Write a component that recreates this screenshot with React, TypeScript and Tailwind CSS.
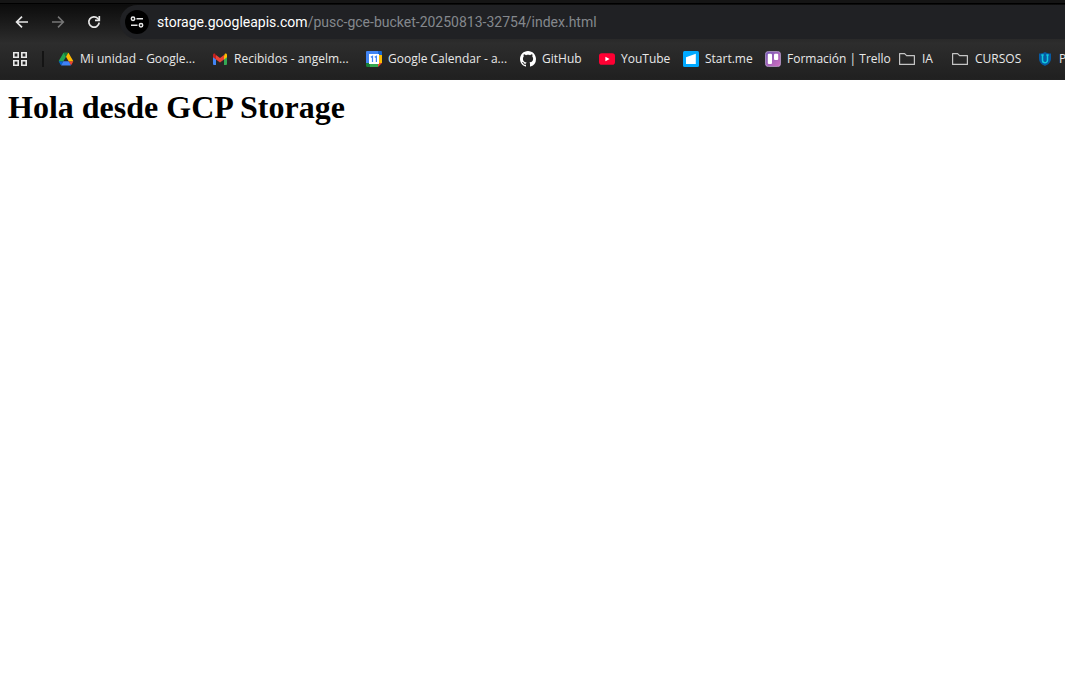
import type { ReactNode } from "react";

function BackIcon() {
  return (
    <svg width="16" height="16" viewBox="0 0 16 16" fill="none" stroke="currentColor" strokeWidth="1.7">
      <path d="M14 8H3M8 2.6 2.6 8 8 13.4" />
    </svg>
  );
}

function ForwardIcon() {
  return (
    <svg width="16" height="16" viewBox="0 0 16 16" fill="none" stroke="currentColor" strokeWidth="1.5">
      <path d="M2 8h11M8 2.6 13.4 8 8 13.4" />
    </svg>
  );
}

function ReloadIcon() {
  return (
    <svg width="16" height="16" viewBox="0 0 16 16" fill="none" stroke="currentColor" strokeWidth="1.7">
      <path d="M13.2 8.6A5.2 5.2 0 1 1 11.9 4.5L13.4 6" />
      <path d="M13.3 2v4.4H9" />
    </svg>
  );
}

function TuneIcon() {
  return (
    <svg width="14" height="14" viewBox="0 0 14 14" fill="none" stroke="currentColor" strokeWidth="1.5">
      <circle cx="3" cy="3.7" r="1.7" />
      <path d="M6.5 3.7H13M1 10.3h6.5" />
      <circle cx="11" cy="10.3" r="1.7" />
    </svg>
  );
}

function GridIcon() {
  return (
    <svg width="16" height="16" viewBox="0 0 16 16" fill="none" stroke="currentColor" strokeWidth="1.6">
      <path d="M1.8 1.8h4.4v4.4H1.8zM9.8 1.8h4.4v4.4H9.8zM1.8 9.8h4.4v4.4H1.8zM9.8 9.8h4.4v4.4H9.8z" />
    </svg>
  );
}

function DriveIcon() {
  return (
    <svg width="16" height="16" viewBox="-5 -4 97.3 86">
      <path d="m6.6 66.85 3.85 6.65c.8 1.4 1.95 2.5 3.3 3.3l13.75-23.8h-27.5c0 1.55.4 3.1 1.2 4.5z" fill="#0066da" />
      <path d="m43.65 25-13.75-23.8c-1.35.8-2.5 1.9-3.3 3.3l-25.4 44a9.06 9.06 0 0 0 -1.2 4.5h27.5z" fill="#22a652" />
      <path d="m73.55 76.8c1.35-.8 2.5-1.9 3.3-3.3l1.6-2.75 7.65-13.25c.8-1.4 1.2-2.95 1.2-4.5h-27.5l5.85 11.5z" fill="#ea4335" />
      <path d="m43.65 25 13.75-23.8c-1.35-.8-2.9-1.2-4.5-1.2h-18.5c-1.6 0-3.15.45-4.5 1.2z" fill="#188038" />
      <path d="m59.8 53h-32.3l-13.75 23.8c1.35.8 2.9 1.2 4.5 1.2h50.8c1.6 0 3.15-.45 4.5-1.2z" fill="#3f82f5" />
      <path d="m73.4 26.5-12.7-22c-.8-1.4-1.95-2.5-3.3-3.3l-13.75 23.8 16.15 28h27.45c0-1.55-.4-3.1-1.2-4.5z" fill="#ffba00" />
    </svg>
  );
}

function GmailIcon() {
  return (
    <svg width="16" height="16" viewBox="0 0 16 16">
      <path d="M1 4v9a1 1 0 0 0 1 1h2V6z" fill="#4285f4" />
      <path d="M15 4v9a1 1 0 0 1-1 1h-2V6z" fill="#34a853" />
      <path d="M12 5v3.6l3-2.3V4c0-1.4-1.3-1.9-2.3-1.1z" fill="#fbbc04" />
      <path d="M4 5v3.6L1 6.3V4c0-1.4 1.3-1.9 2.3-1.1z" fill="#c5221f" />
      <path d="M4 8.6V4l4 3 4-3v4.6l-4 3z" fill="#ea4335" />
    </svg>
  );
}

function CalendarIcon() {
  return (
    <svg width="16" height="16" viewBox="0 0 16 16">
      <path d="M1.2 0H12v4H4v8H0V1.2C0 .5.5 0 1.2 0z" fill="#4285f4" />
      <path d="M12 0h2.8c.7 0 1.2.5 1.2 1.2V4h-4z" fill="#1967d2" />
      <path d="M12 4h4v8h-4z" fill="#fbbc04" />
      <path d="M4 12h8v4H4z" fill="#34a853" />
      <path d="M0 12h4v4H1.2C.5 16 0 15.5 0 14.8z" fill="#188038" />
      <path d="M12 12h4l-4 4z" fill="#ea4335" />
      <path d="M3 3h10v10H3z" fill="#fff" />
      <path d="M4.8 6.2 6.5 5.2V11M8.7 6.2l1.7-1V11" fill="none" stroke="#4285f4" strokeWidth="1.2" />
    </svg>
  );
}

function GitHubIcon() {
  return (
    <svg width="16" height="16" viewBox="0 0 16 16" fill="#fff">
      <path d="M8 0C3.58 0 0 3.58 0 8c0 3.54 2.29 6.53 5.47 7.59.4.07.55-.17.55-.38 0-.19-.01-.82-.01-1.49-2.01.37-2.53-.49-2.69-.94-.09-.23-.48-.94-.82-1.13-.28-.15-.68-.52-.01-.53.63-.01 1.08.58 1.23.82.72 1.21 1.87.87 2.33.66.07-.52.28-.87.51-1.07-1.78-.2-3.64-.89-3.64-3.95 0-.87.31-1.59.82-2.15-.08-.2-.36-1.02.08-2.12 0 0 .67-.21 2.2.82.64-.18 1.32-.27 2-.27s1.36.09 2 .27c1.53-1.04 2.2-.82 2.2-.82.44 1.1.16 1.92.08 2.12.51.56.82 1.27.82 2.15 0 3.07-1.87 3.75-3.65 3.95.29.25.54.73.54 1.48 0 1.07-.01 1.93-.01 2.2 0 .21.15.46.55.38A8 8 0 0 0 16 8c0-4.42-3.58-8-8-8z" />
    </svg>
  );
}

function YouTubeIcon() {
  return (
    <svg width="16" height="16" viewBox="0 0 16 16">
      <rect y="2.3" width="16" height="11.4" rx="2.8" fill="#ff0033" />
      <path d="m6.4 5.7 4.2 2.3-4.2 2.3z" fill="#fff" />
    </svg>
  );
}

function StartMeIcon() {
  return (
    <svg width="16" height="16" viewBox="0 0 16 16">
      <rect width="16" height="16" rx="1.5" fill="#00a9ff" />
      <path d="M3 6.2 12.8 2.8V13H3z" fill="#fff" />
    </svg>
  );
}

function TrelloIcon() {
  return (
    <svg width="16" height="16" viewBox="0 0 16 16">
      <defs>
        <linearGradient id="trello" x1="0" y1="0" x2="1" y2="1">
          <stop offset="0" stopColor="#7157b5" />
          <stop offset="1" stopColor="#d36fc0" />
        </linearGradient>
      </defs>
      <rect x=".4" y=".4" width="15.2" height="15.2" rx="3.2" fill="url(#trello)" stroke="#b7a1cd" strokeWidth=".8" />
      <rect x="2.8" y="2.8" width="4.2" height="10.2" rx="1" fill="#fff" />
      <rect x="9" y="2.8" width="4.2" height="6.2" rx="1" fill="#fff" />
    </svg>
  );
}

function FolderIcon() {
  return (
    <svg width="18" height="16" viewBox="0 0 18 16" fill="none" stroke="#c4c4c4" strokeWidth="1.2">
      <path d="M1.6 2.6h5l2 2h7.8v8.8H1.6z" strokeLinejoin="round" />
    </svg>
  );
}

function ShieldIcon() {
  return (
    <svg width="16" height="16" viewBox="0 0 16 16">
      <path d="M8 1c2 1.3 4 1.6 6 1.6v5c0 3.7-2.5 6-6 7.4-3.5-1.4-6-3.7-6-7.4v-5C4 2.6 6 2.3 8 1z" fill="#075aa2" />
      <path d="M5.5 4v5.2a2.5 2.5 0 0 0 5 0V4M4.3 4h2.4M9.3 4h2.4" fill="none" stroke="#10c9df" strokeWidth="1.5" />
    </svg>
  );
}

type Bookmark = { label: string; icon: ReactNode; width: string };

const bookmarks: Bookmark[] = [
  { label: "Mi unidad - Google...", icon: <DriveIcon />, width: "w-[154px]" },
  { label: "Recibidos - angelm...", icon: <GmailIcon />, width: "w-[154px]" },
  { label: "Google Calendar - a...", icon: <CalendarIcon />, width: "w-[154px]" },
  { label: "GitHub", icon: <GitHubIcon />, width: "w-[79px]" },
  { label: "YouTube", icon: <YouTubeIcon />, width: "w-[84px]" },
  { label: "Start.me", icon: <StartMeIcon />, width: "w-[82px]" },
  { label: "Formación | Trello", icon: <TrelloIcon />, width: "w-[133px]" },
  { label: "IA", icon: <FolderIcon />, width: "w-[53px]" },
  { label: "CURSOS", icon: <FolderIcon />, width: "w-[86px]" },
  { label: "P", icon: <ShieldIcon />, width: "w-[60px]" },
];

export default function App() {
  return (
    <div className="min-h-screen overflow-hidden bg-white">
      <header className="border-b border-[#222] bg-linear-to-b from-[#090909] via-[#2d2d2d] via-55% to-[#202020] text-[#e8e8e8]">
        <div className="h-1 border-b border-black bg-[#151515]" />
        <div className="flex h-9 items-center pl-3.5">
          <nav aria-label="Historial" className="flex items-center gap-5">
            <button type="button" aria-label="Atrás"><BackIcon /></button>
            <button type="button" aria-label="Adelante" className="text-[#777]"><ForwardIcon /></button>
            <button type="button" aria-label="Recargar"><ReloadIcon /></button>
          </nav>
          <div className="ml-[18px] flex h-[34px] min-w-0 flex-1 items-center gap-2 rounded-l-full bg-[#202124] pl-[5px]">
            <button type="button" aria-label="Información del sitio" className="flex size-6 shrink-0 items-center justify-center rounded-full bg-black">
              <TuneIcon />
            </button>
            <a href="#" className="truncate font-[Roboto,sans-serif] text-sm leading-5 text-[#84888d]">
              <span className="text-white">storage.googleapis.com</span>/pusc-gce-bucket-20250813-32754/index.html
            </a>
          </div>
        </div>
        <nav aria-label="Marcadores" className="flex h-[39px] items-center overflow-hidden pb-0.5 pl-3 font-['Open_Sans','Noto_Sans',sans-serif]">
          <button type="button" aria-label="Aplicaciones" className="shrink-0"><GridIcon /></button>
          <div className="mr-3.5 ml-3.5 h-4 w-0.5 shrink-0 bg-[#141414]" />
          {bookmarks.map((b) => (
            <a key={b.label} href="#" className={`flex shrink-0 items-center gap-1.5 text-xs whitespace-nowrap ${b.width}`}>
              <span className="shrink-0">{b.icon}</span>
              {b.label}
            </a>
          ))}
        </nav>
      </header>
      <main className="p-2">
        <h1 className="font-['Liberation_Serif',serif] text-[32px] leading-[38px] font-bold text-black">Hola desde GCP Storage</h1>
      </main>
    </div>
  );
}
